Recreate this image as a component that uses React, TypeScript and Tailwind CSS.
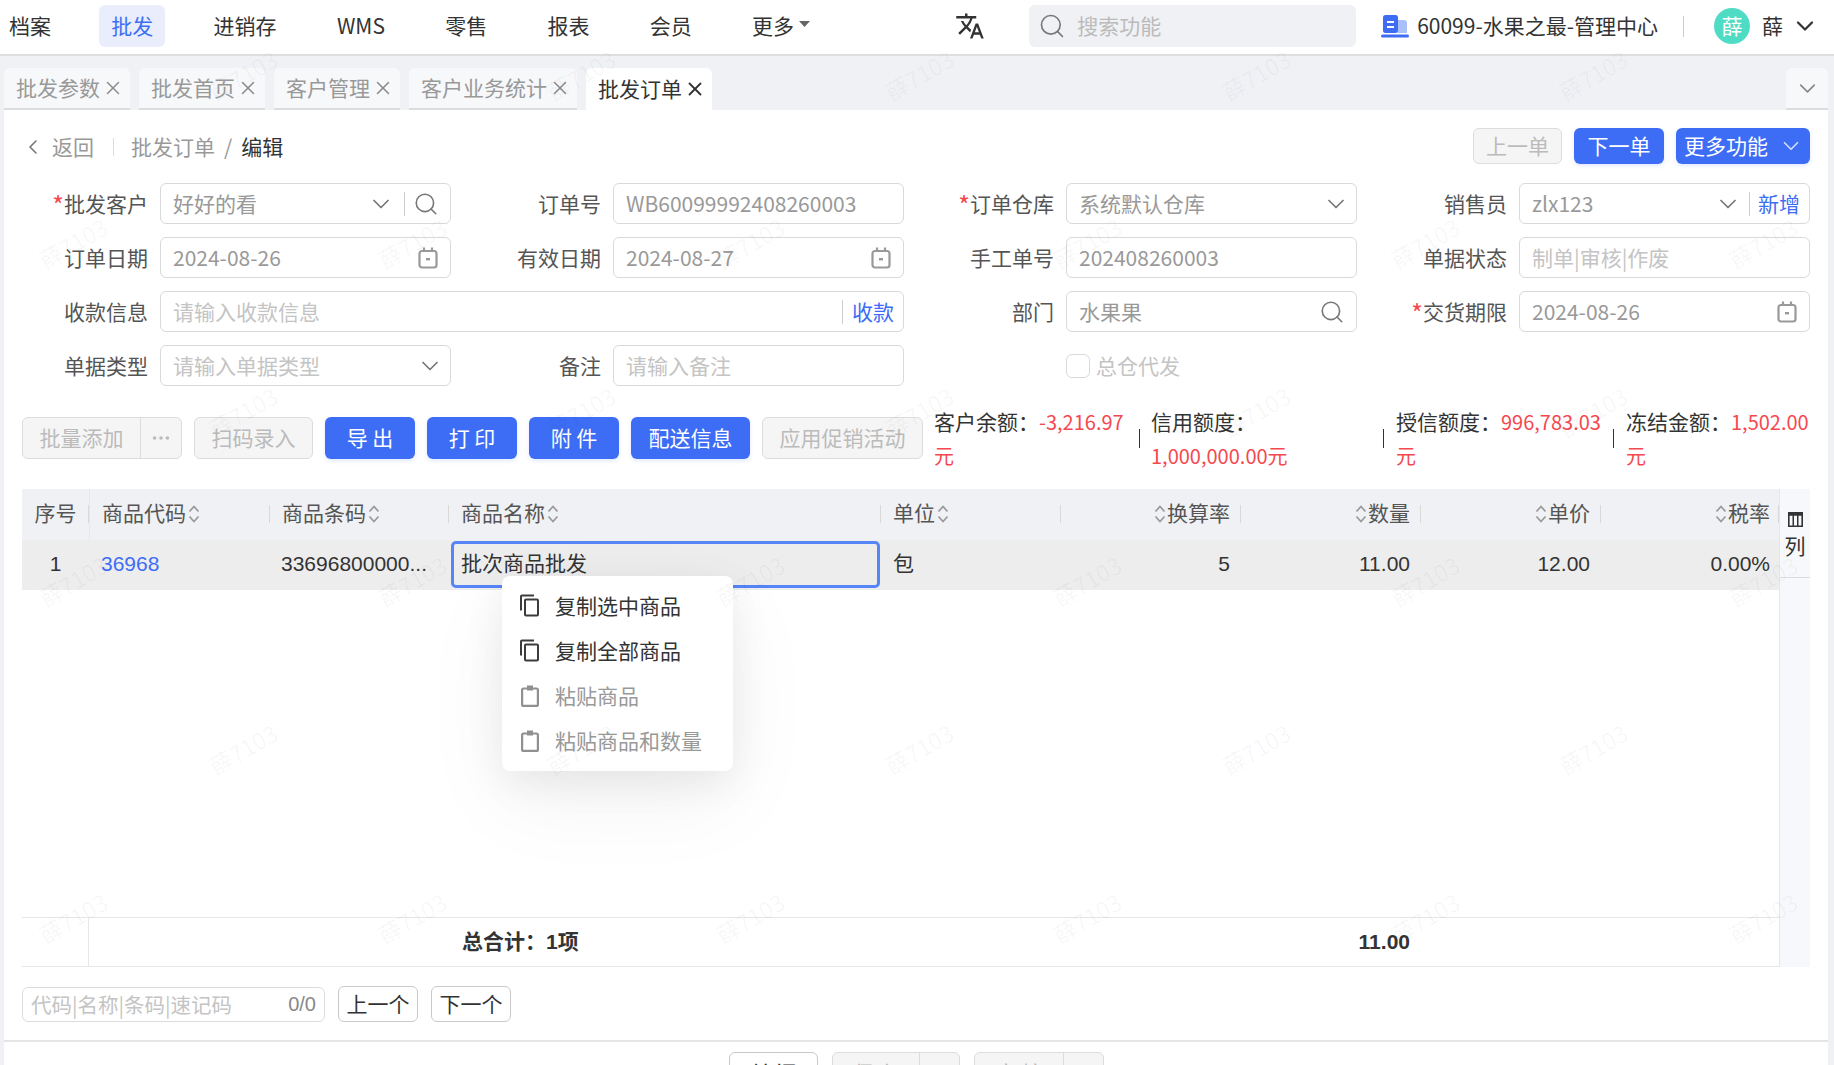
import { ChevronDown, ChevronLeft, Ellipsis, Search, X } from "lucide-react";
import { MdOutlineContentCopy, MdTranslate } from "react-icons/md";
import type { ReactNode } from "react";

const navItems = ["档案", "批发", "进销存", "WMS", "零售", "报表", "会员"];
const tabs = ["批发参数", "批发首页", "客户管理", "客户业务统计"];
const tableCols = "grid grid-cols-[67px_181px_179px_432px_180px_180px_180px_180px_178px]";

const watermarks = [
  ...[243, 581, 919, 1256, 1593].flatMap((x) => [75, 412, 749].map((y) => [x, y])),
  ...[73, 412, 750, 1087, 1425, 1763].flatMap((x) => [243, 581, 918].map((y) => [x, y])),
];

function CalendarIcon() {
  return (
    <svg width="20" height="22" viewBox="0 0 20 22" fill="none" stroke="#999" strokeWidth="2.2" className="shrink-0">
      <rect x="1.5" y="4" width="17" height="16.5" rx="2.5" />
      <path d="M6 0.5v4M14 0.5v4" />
      <rect x="8" y="11" width="4" height="2.4" fill="#999" stroke="none" />
    </svg>
  );
}

function SortIcon() {
  return (
    <svg width="12" height="18" viewBox="0 0 12 18" fill="none" stroke="#999" strokeWidth="1.7" className="shrink-0">
      <path d="M1.5 6.5L6 1.5l4.5 5M1.5 11.5L6 16.5l4.5-5" />
    </svg>
  );
}

function PasteIcon() {
  return (
    <svg width="18" height="22" viewBox="0 0 18 22" fill="none" stroke="#909090" strokeWidth="2.2">
      <rect x="1.1" y="3.5" width="15.8" height="17.4" rx="1.5" />
      <rect x="6" y="0.5" width="6" height="5" fill="#909090" stroke="none" />
    </svg>
  );
}

function CopyIcon() {
  return <MdOutlineContentCopy size={27} color="#3c3c3c" />;
}

function BuildingIcon() {
  return (
    <svg width="28" height="24" viewBox="0 0 28 24">
      <rect x="2" y="1" width="15" height="18" rx="2.5" fill="#3f6cf4" />
      <rect x="6" y="7" width="7" height="2" fill="#fff" />
      <rect x="6" y="12" width="7" height="2" fill="#fff" />
      <path d="M17 6h6a3 3 0 0 1 3 3v10h-9z" fill="#a9c0fb" />
      <rect x="0" y="20.5" width="28" height="3" rx="1.5" fill="#3f6cf4" />
    </svg>
  );
}

function FieldChevron({ className = "-mr-[6px]" }: { className?: string }) {
  return <ChevronDown size={28} strokeWidth={1.5} color="#777" className={`shrink-0 ${className}`} />;
}

function Field({ label, required, children, wide }: { label: string; required?: boolean; children: ReactNode; wide?: boolean }) {
  return (
    <div className={wide ? "col-span-2 flex items-center" : "flex items-center"}>
      <label className="w-[140px] mr-3 text-right text-[#555] leading-none shrink-0 whitespace-nowrap">
        {required && <span className="text-[25px] leading-[0] align-[-3px] text-[#f5484f]">*</span>}
        {label}
      </label>
      <div className="flex-1 min-w-0 h-[41px] flex items-center border border-[#d9d9d9] rounded-md bg-white pl-3 pr-3">
        {children}
      </div>
    </div>
  );
}

function Val({ value, placeholder }: { value?: string; placeholder?: string }) {
  return (
    <input
      readOnly
      value={value ?? ""}
      placeholder={placeholder}
      className="flex-1 min-w-0 bg-transparent outline-none text-[#999] placeholder:text-[#c4c4c4]"
    />
  );
}

function Primary({ children, className = "" }: { children: ReactNode; className?: string }) {
  return (
    <button className={`h-[42px] rounded-md bg-[#3d6df5] text-white shadow-[0_2px_4px_rgba(61,109,245,0.15)] ${className}`}>
      {children}
    </button>
  );
}

function Disabled({ children, className = "" }: { children: ReactNode; className?: string }) {
  return (
    <button className={`h-[42px] rounded-md bg-[#f5f5f5] border border-[#dcdcdc] text-[#bbb] ${className}`}>
      {children}
    </button>
  );
}

function Stat({ label, first, second, className }: { label: string; first?: string; second: string; className: string }) {
  return (
    <div className={`relative text-[21px] leading-[34px] shrink-0 ${className}`}>
      <div className="whitespace-nowrap text-[#333]">
        {label}：<span className="text-[20px] text-[#f5484f]">{first}</span>
      </div>
      <div className="text-[20px] text-[#f5484f]">{second}</div>
    </div>
  );
}

function HeadCell({ title, align = "left", center, className = "" }: { title: string; align?: "left" | "right"; center?: boolean; className?: string }) {
  return (
    <div className={`relative flex items-center h-full pb-[2px] ${center ? "justify-center" : align === "right" ? "justify-end pr-[11px]" : "pl-[12px]"} ${className}`}>
      {align === "right" && <span className="mr-[1px]"><SortIcon /></span>}
      <span>{title}</span>
      {!center && align === "left" && <span className="ml-[2px]"><SortIcon /></span>}
      <span className="absolute right-0 top-[16px] h-[18px] w-px bg-[#d8d8d8]" />
    </div>
  );
}

function MenuItem({ icon, text, muted }: { icon: ReactNode; text: string; muted?: boolean }) {
  return (
    <div className={`h-[45px] flex items-center pl-4 ${muted ? "text-[#999]" : "text-[#333]"}`}>
      <span className="w-[24px] flex justify-center mr-[13px]">{icon}</span>
      {text}
    </div>
  );
}

export default function App() {
  return (
    <div className="relative w-[1834px] h-[1065px] overflow-hidden flex flex-col bg-[#f0f1f5] text-[21px] text-[#333] font-['Noto_Sans_CJK_SC','Liberation_Sans',sans-serif]">
      {/* top bar */}
      <header className="h-[56px] shrink-0 bg-white border-b-2 border-[#dedede] flex items-center pr-[15px] pb-[2px]">
        <nav className="flex items-center gap-[36.3px] -ml-[3px]">
          {navItems.map((n) => (
            <a key={n} className={`h-[42px] px-3 flex items-center rounded-md ${n === "批发" ? "bg-[#e9edfc] text-[#3d6df5]" : "text-[#333]"}`}>
              {n}
            </a>
          ))}
          <a className="h-[42px] px-3 flex items-center gap-[5px]">
            更多
            <svg width="11" height="6" viewBox="0 0 11 6" className="mb-1"><path d="M0 0h11L5.5 6z" fill="#666" /></svg>
          </a>
        </nav>
        <MdTranslate size={30} color="#333" className="ml-auto mr-[44px]" />
        <div className="w-[327px] h-[42px] rounded-md bg-[#f0f1f4] flex items-center pl-[9px] gap-[11px] text-[#bbb] mr-[25px]">
          <Search size={28} strokeWidth={1.4} color="#777" />
          搜索功能
        </div>
        <BuildingIcon />
        <span className="ml-2 whitespace-nowrap">60099-水果之最-管理中心</span>
        <span className="w-px h-[21px] bg-[#ccc] ml-[25px] mr-[30px]" />
        <span className="w-9 h-9 rounded-full bg-[#4fdcc4] text-white flex items-center justify-center">薛</span>
        <span className="ml-3">薛</span>
        <ChevronDown size={28} strokeWidth={1.9} color="#333" className="ml-[8px]" />
      </header>

      {/* tabs */}
      <div className="h-[54px] shrink-0 flex items-end gap-[9px] pl-1 pr-[6px]">
        {tabs.map((t) => (
          <div key={t} className="h-[42px] rounded-t-md bg-[#f7f8fa] border-b-2 border-[#dcdcdc] flex items-center pl-3 pr-[6px] gap-[2px] text-[#999]">
            {t}
            <X size={22} strokeWidth={1.6} color="#888" />
          </div>
        ))}
        <div className="h-[42px] rounded-t-md bg-white flex items-center pl-3 pr-[6px] gap-[2px] text-[#333]">
          批发订单
          <X size={22} strokeWidth={2} color="#333" />
        </div>
        <div className="ml-auto w-[42px] h-[42px] rounded-t-md bg-[#f7f8fa] border-b-2 border-[#dcdcdc] flex items-center justify-center">
          <ChevronDown size={27} strokeWidth={1.5} color="#888" />
        </div>
      </div>

      {/* page */}
      <main className="flex-1 min-h-0 ml-1 mr-[6px] bg-white flex flex-col">
        <div className="flex items-center h-[36px] mt-[18px] pl-[17px] pr-[18px] shrink-0">
          <div className="flex items-center mt-[2px]">
            <ChevronLeft size={24} strokeWidth={1.6} color="#777" />
            <span className="ml-[7px] text-[#999]">返回</span>
            <span className="w-px h-[18px] bg-[#ddd] ml-[19px] mr-[17px]" />
            <span className="text-[#999]">批发订单</span>
            <span className="text-[#999] mx-[9px]">/</span>
            <span>编辑</span>
          </div>
          <Disabled className="ml-auto !h-[36px] w-[89px]">上一单</Disabled>
          <Primary className="!h-[36px] w-[90px] ml-3">下一单</Primary>
          <Primary className="!h-[36px] w-[134px] ml-3 flex items-center pl-2 gap-[10px]">
            更多功能
            <ChevronDown size={26} strokeWidth={1.6} color="#cfdcff" />
          </Primary>
        </div>

        <div className="grid grid-cols-[repeat(4,443px)] gap-x-[10px] gap-y-[13px] mt-[19px] pl-1 shrink-0">
          <Field label="批发客户" required>
            <Val value="好好的看" />
            <FieldChevron className="" />
            <span className="w-px h-[24px] bg-[#ccc] ml-[9px] mr-[8px] shrink-0" />
            <Search size={26} strokeWidth={1.5} color="#777" className="shrink-0 -mr-px" />
          </Field>
          <Field label="订单号"><Val value="WB60099992408260003" /></Field>
          <Field label="订单仓库" required>
            <Val value="系统默认仓库" />
            <FieldChevron />
          </Field>
          <Field label="销售员">
            <Val value="zlx123" />
            <FieldChevron className="" />
            <span className="w-px h-[24px] bg-[#ccc] ml-[7px] mr-[8px] shrink-0" />
            <span className="text-[#3d6df5] -mr-[3px]">新增</span>
          </Field>

          <Field label="订单日期"><Val value="2024-08-26" /><CalendarIcon /></Field>
          <Field label="有效日期"><Val value="2024-08-27" /><CalendarIcon /></Field>
          <Field label="手工单号"><Val value="202408260003" /></Field>
          <Field label="单据状态"><Val placeholder="制单|审核|作废" /></Field>

          <Field label="收款信息" wide>
            <Val placeholder="请输入收款信息" />
            <span className="w-px h-[24px] bg-[#ccc] mr-[9px]" />
            <span className="text-[#3d6df5] -mr-[3px]">收款</span>
          </Field>
          <Field label="部门">
            <Val value="水果果" />
            <Search size={26} strokeWidth={1.5} color="#777" className="shrink-0 -mr-px" />
          </Field>
          <Field label="交货期限" required><Val value="2024-08-26" /><CalendarIcon /></Field>

          <Field label="单据类型">
            <Val placeholder="请输入单据类型" />
            <FieldChevron />
          </Field>
          <Field label="备注"><Val placeholder="请输入备注" /></Field>
          <div className="flex items-center gap-[6px] pl-[152px] text-[#c4c4c4]">
            <span className="w-6 h-6 rounded-md border border-[#d9d9d9]" />
            总仓代发
          </div>
        </div>

        {/* toolbar + balances */}
        <div className="flex items-start h-[68px] mt-[21px] pl-[18px] shrink-0">
          <div className="flex items-center gap-[12px] mt-[10px]">
            <div className="h-[42px] flex rounded-md bg-[#f5f5f5] border border-[#dcdcdc] text-[#bbb]">
              <span className="w-[118px] flex items-center justify-center border-r border-[#dcdcdc]">批量添加</span>
              <span className="w-[40px] flex items-center justify-center"><Ellipsis size={22} color="#bbb" /></span>
            </div>
            <Disabled className="w-[119px]">扫码录入</Disabled>
            <Primary className="w-[90px]">导 出</Primary>
            <Primary className="w-[90px]">打 印</Primary>
            <Primary className="w-[90px]">附 件</Primary>
            <Primary className="w-[119px]">配送信息</Primary>
            <Disabled className="w-[161px]">应用促销活动</Disabled>
          </div>
          <div className="flex items-center ml-[11px] h-[68px] -mt-[3px]">
            <Stat label="客户余额" first="-3,216.97" second="元" className="w-[205px]" />
            <span className="w-px h-[19px] bg-[#333] mr-[11px]" />
            <Stat label="信用额度" second="1,000,000.00元" className="w-[232px]" />
            <span className="w-px h-[19px] bg-[#333] mr-[12px]" />
            <Stat label="授信额度" first="996,783.03" second="元" className="w-[217px]" />
            <span className="w-px h-[19px] bg-[#333] mr-[12px]" />
            <Stat label="冻结金额" first="1,502.00" second="元" className="w-[184px]" />
          </div>
        </div>

        {/* table */}
        <div className="relative flex h-[478px] mt-[14px] mx-[18px] shrink-0 font-['Liberation_Sans','Noto_Sans_CJK_SC',sans-serif]">
          <div className="w-[1757px] flex flex-col">
            <div className={`${tableCols} h-[51px] bg-[#f0f1f4] text-[#555]`}>
              <HeadCell title="序号" center />
              <HeadCell title="商品代码" className="border-l border-[#e6e7ea]" />
              <HeadCell title="商品条码" />
              <HeadCell title="商品名称" />
              <HeadCell title="单位" />
              <HeadCell title="换算率" align="right" />
              <HeadCell title="数量" align="right" />
              <HeadCell title="单价" align="right" />
              <HeadCell title="税率" align="right" className="!pr-[9px]" />
            </div>
            <div className={`${tableCols} h-[50px] pb-[2px] bg-[#ededee] items-center`}>
              <div className="text-center">1</div>
              <div className="pl-[12px] text-[#3d6df5]">36968</div>
              <div className="pl-[11px] whitespace-nowrap">33696800000...</div>
              <div className="h-[47px] ml-[2px] mr-[1px] border-[3px] border-[#5585f7] rounded-[5px] flex items-center pl-[7px]">批次商品批发</div>
              <div className="pl-3">包</div>
              <div className="text-right pr-[11px]">5</div>
              <div className="text-right pr-[11px]">11.00</div>
              <div className="text-right pr-[11px]">12.00</div>
              <div className="text-right pr-[9px]">0.00%</div>
            </div>
            <div className="flex-1" />
            <div className={`${tableCols} h-[50px] border-y border-[#e6e6e6] items-center font-bold`}>
              <div className="h-full border-r border-[#e6e6e6]" />
              <div />
              <div />
              <div className="pl-[13px] whitespace-nowrap">总合计：1项</div>
              <div />
              <div />
              <div className="text-right pr-[11px]">11.00</div>
            </div>
          </div>
          <div className="w-[31px] bg-[#f7f8fb] border-l border-[#e6e7ea] flex flex-col items-center">
            <div className="w-full flex flex-col items-center pt-[23px] h-[89px] border-b border-[#dcdcdc]">
              <svg width="15" height="15" viewBox="0 0 14 14" className="shrink-0">
                <path d="M0 0h14v14H0zM1.5 3.5v9h2.7v-9zM5.6 3.5v9h2.8v-9zM9.8 3.5v9h2.7v-9z" fill="#333" fillRule="evenodd" />
              </svg>
              <span className="mt-[6px] leading-[28px]">列</span>
            </div>
          </div>

          {/* paste menu */}
          <div className="absolute left-[480px] top-[87px] w-[231px] h-[195px] py-[7px] rounded-lg bg-white shadow-[0_12px_40px_rgba(0,0,0,0.07),0_30px_90px_rgba(0,0,0,0.05)] font-['Noto_Sans_CJK_SC',sans-serif]">
            <MenuItem icon={<CopyIcon />} text="复制选中商品" />
            <MenuItem icon={<CopyIcon />} text="复制全部商品" />
            <MenuItem icon={<PasteIcon />} text="粘贴商品" muted />
            <MenuItem icon={<PasteIcon />} text="粘贴商品和数量" muted />
          </div>
        </div>

        <div className="flex items-center gap-[13px] mt-[19px] mx-[18px] h-[36px] shrink-0">
          <div className="w-[303px] h-[35px] border border-[#dcdcdc] rounded-md flex items-center px-2 text-[20.5px] text-[#c4c4c4]">
            代码|名称|条码|速记码
            <span className="ml-auto text-[#888] font-['Liberation_Sans',sans-serif] text-[20px]">0/0</span>
          </div>
          <button className="w-[80px] h-[36px] border border-[#c9c9c9] rounded-md">上一个</button>
          <button className="w-[80px] h-[36px] border border-[#c9c9c9] rounded-md">下一个</button>
        </div>

        <div className="flex items-start gap-[14px] mt-[18px] pl-[725px] pt-[10px] border-t-2 border-[#e5e5e5] shrink-0">
          <button className="w-[89px] h-[42px] border border-[#c9c9c9] rounded-md">关 闭</button>
          <div className="h-[42px] flex rounded-md bg-[#f5f5f5] border border-[#dcdcdc] text-[#bbb]">
            <span className="w-[87px] flex items-center justify-center border-r border-[#dcdcdc]">保 存</span>
            <span className="w-[39px]" />
          </div>
          <div className="h-[42px] flex rounded-md bg-[#f5f5f5] border border-[#dcdcdc] text-[#bbb]">
            <span className="w-[89px] flex items-center justify-center border-r border-[#dcdcdc]">审 核</span>
            <span className="w-[39px]" />
          </div>
        </div>
      </main>

      {/* watermark */}
      <div className="absolute inset-0 pointer-events-none">
        {watermarks.map(([x, y]) => (
          <span
            key={`${x}-${y}`}
            className="absolute -translate-x-1/2 -translate-y-1/2 -rotate-[30deg] whitespace-nowrap text-[23px] text-black/[0.04]"
            style={{ left: x, top: y }}
          >
            薛7103
          </span>
        ))}
      </div>
    </div>
  );
}
